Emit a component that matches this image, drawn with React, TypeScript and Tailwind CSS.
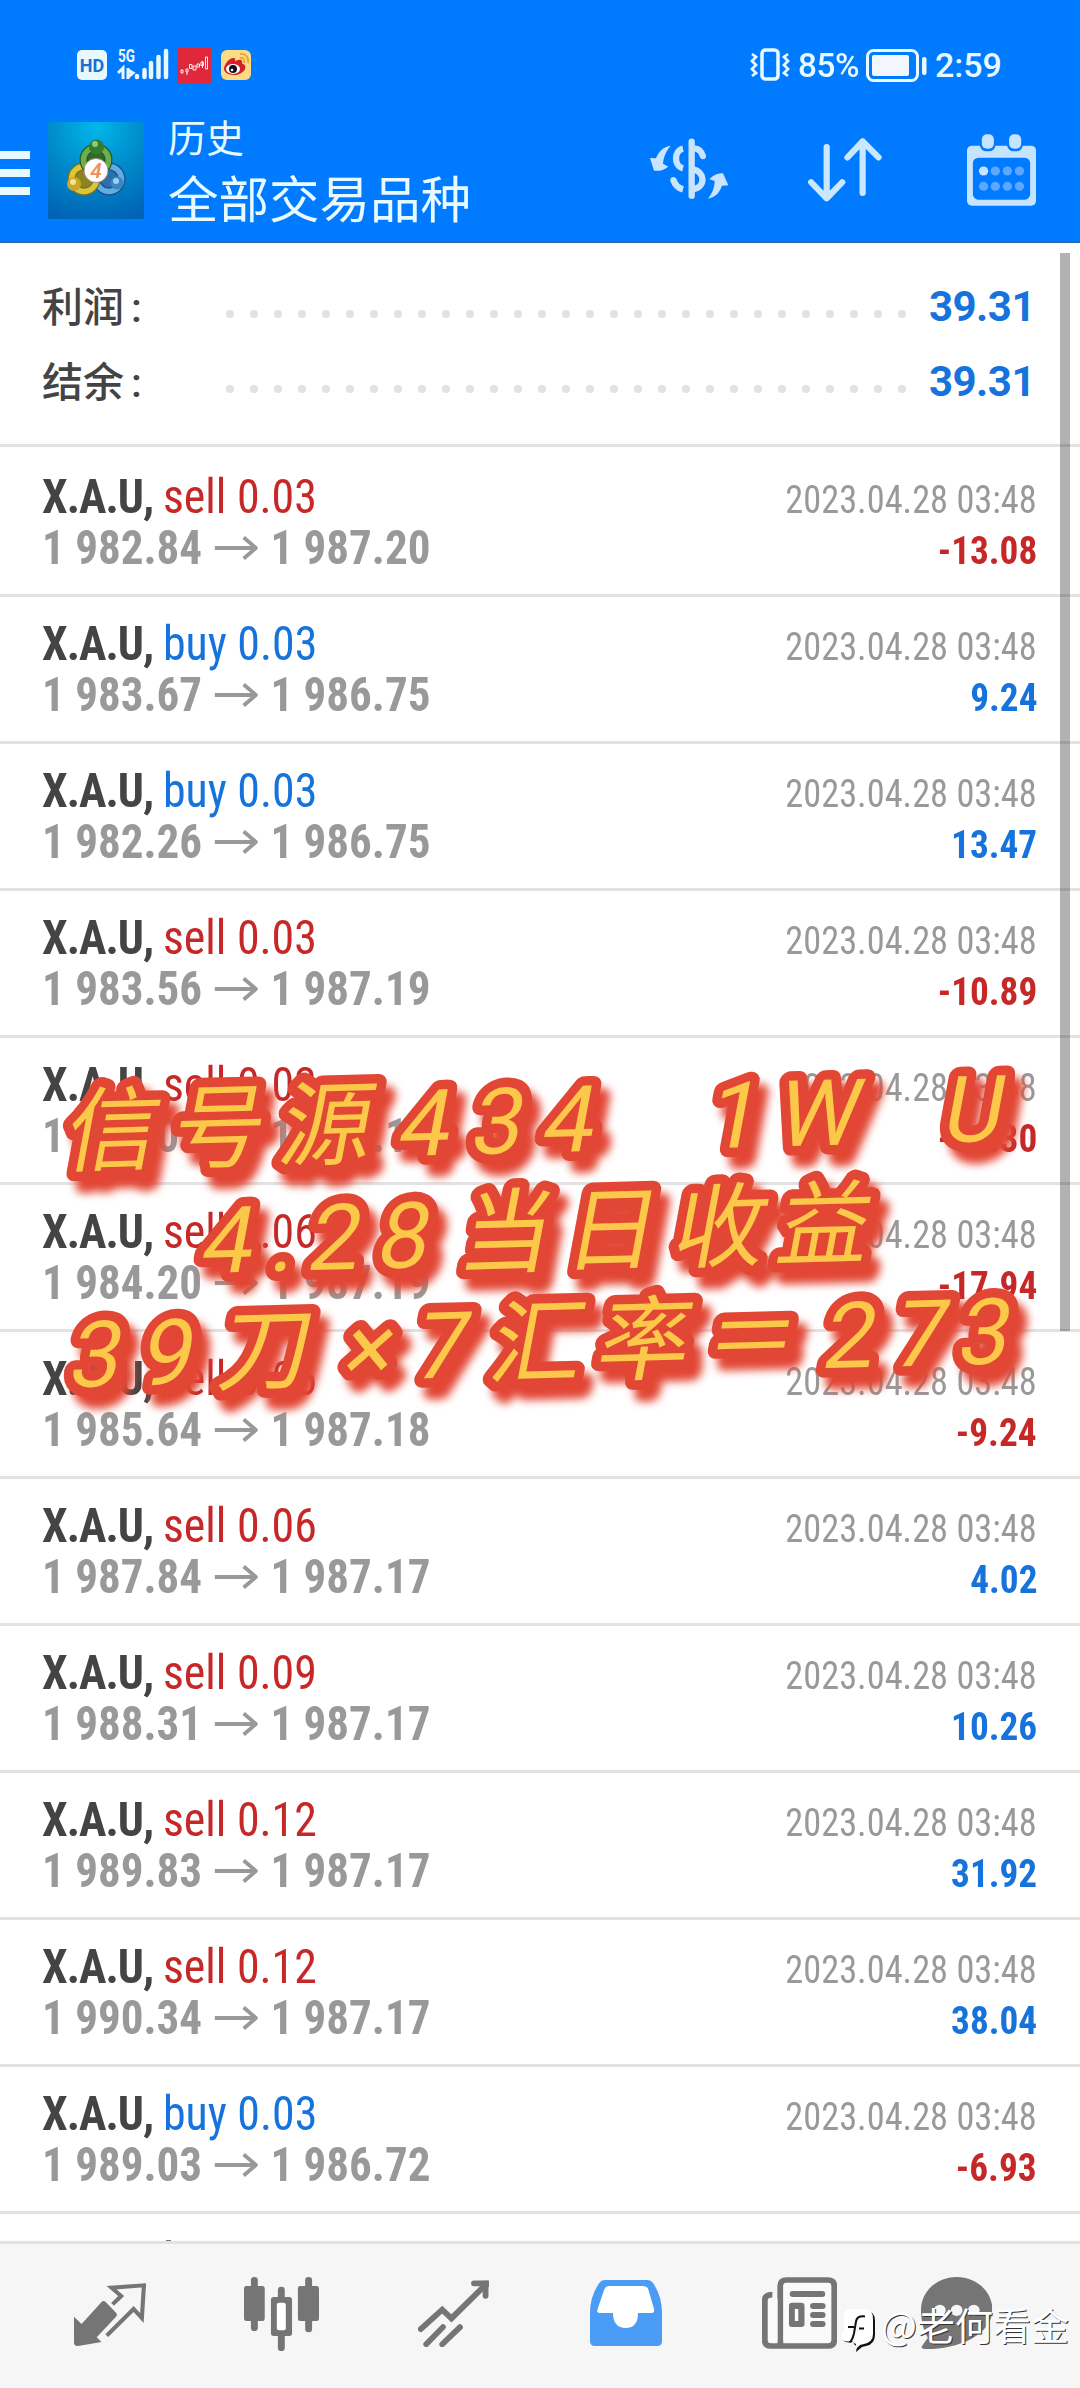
import clsx from 'clsx';

type Deal = {
  side: 'buy' | 'sell';
  volume: string;
  open: string;
  close: string;
  profit: string;
};

const TIME = '2023.04.28 03:48';

const deals: Deal[] = [
  { side: 'sell', volume: '0.03', open: '1 982.84', close: '1 987.20', profit: '-13.08' },
  { side: 'buy', volume: '0.03', open: '1 983.67', close: '1 986.75', profit: '9.24' },
  { side: 'buy', volume: '0.03', open: '1 982.26', close: '1 986.75', profit: '13.47' },
  { side: 'sell', volume: '0.03', open: '1 983.56', close: '1 987.19', profit: '-10.89' },
  { side: 'sell', volume: '0.03', open: '1 983.09', close: '1 987.19', profit: '-12.30' },
  { side: 'sell', volume: '0.06', open: '1 984.20', close: '1 987.19', profit: '-17.94' },
  { side: 'sell', volume: '0.06', open: '1 985.64', close: '1 987.18', profit: '-9.24' },
  { side: 'sell', volume: '0.06', open: '1 987.84', close: '1 987.17', profit: '4.02' },
  { side: 'sell', volume: '0.09', open: '1 988.31', close: '1 987.17', profit: '10.26' },
  { side: 'sell', volume: '0.12', open: '1 989.83', close: '1 987.17', profit: '31.92' },
  { side: 'sell', volume: '0.12', open: '1 990.34', close: '1 987.17', profit: '38.04' },
  { side: 'buy', volume: '0.03', open: '1 989.03', close: '1 986.72', profit: '-6.93' },
];

const summary = [
  { label: '利润', value: '39.31' },
  { label: '结余', value: '39.31' },
];

// sticker lettering, one centre x per character
const captions = [
  { text: '信号源4341WU', y: 1166, x: [108, 214, 322, 421, 494, 565, 731, 815, 970] },
  { text: '4.28当日收益', y: 1278, x: [224, 280, 331, 400, 502, 608, 716, 820] },
  { text: '39刀×7汇率＝273', y: 1389, x: [92, 164, 261, 365, 438, 533, 640, 747, 846, 917, 981] },
];

function StatusBar() {
  return (
    <div className="flex h-[130px] items-start justify-between pt-[47px] pl-[77px] pr-[78px]">
      <div className="flex items-start">
        <div className="mt-[3px] flex h-[30px] w-[30px] items-center justify-center rounded-[5px] bg-[#e8f8ff] text-[18px] font-bold text-[#1c6fd0]">
          HD
        </div>
        <svg className="ml-[11px] h-[34px] w-[50px] overflow-visible" viewBox="0 0 50 34">
          <text x="0" y="15" fontSize="19" fontWeight="700" textLength="17" lengthAdjust="spacingAndGlyphs" fill="#e8f8ff">
            5G
          </text>
          <path d="M0 26l5-5v11M10 21v11M10 23l5 3-5 4" stroke="#e8f8ff" strokeWidth="3" fill="none" />
          <path d="M19 29v1M26.500 23v7M33 16v14M40.500 10v20M48 4v26" stroke="#e8f8ff" strokeWidth="4.500" strokeLinecap="round" />
        </svg>
        <svg className="ml-[9px] mt-px h-[35px] w-[34px]" viewBox="0 0 34 35">
          <rect width="34" height="35" fill="#e0283c" />
          <path
            d="M4 22h2v3H4zM9 21h2v3H9zM10 24v3M12.500 16.500h2.500v4h-2.500zM16 18h3v4h-3zM20 16h2.500v3H20zM24 14h2.500v3.500H24zM25.500 13v7M28.500 9h2v12h-2z"
            stroke="#fff"
            strokeWidth="0.900"
            fill="none"
          />
        </svg>
        <svg className="ml-[10px] mt-[3px] h-[30px] w-[30px]" viewBox="0 0 30 30">
          <rect width="30" height="30" rx="6" fill="#fbdc82" />
          <path d="M3 19c0-5 6-12 10-11 2 .500 1 3 1 3s6-3 7 0c.500 2-.500 2 1 3 6 3 0 11-9 11-6 0-10-3-10-6z" fill="#d3202c" />
          <ellipse cx="12" cy="19" rx="7" ry="5" fill="#fff" />
          <circle cx="12" cy="19" r="4" fill="#111" />
          <circle cx="11" cy="20" r="1.300" fill="#fff" />
          <path d="M19 8c3-1 5 2 4 5M19 4c6-1 9 4 8 9" stroke="#e9a33a" strokeWidth="1.800" fill="none" />
        </svg>
      </div>
      <div className="flex items-start text-[#e8faff]">
        <svg className="mt-px h-[33px] w-[40px]" viewBox="0 0 40 33" fill="none" stroke="currentColor">
          <rect x="12" y="2" width="16" height="29" rx="3.500" strokeWidth="3.500" />
          <path d="M2 6l4 3-4 4 4 4-4 4 4 4-4 3M38 6l-4 3 4 4-4 4 4 4-4 4 4 3" strokeWidth="2.800" />
        </svg>
        <span className="ml-[8px] w-[63px] origin-left scale-x-[0.980] whitespace-nowrap text-[34px] leading-[36px] font-medium tracking-[-0.500px]">
          85%
        </span>
        <svg className="ml-[5px] mt-[2px] h-[33px] w-[61px]" viewBox="0 0 61 33">
          <rect x="1.500" y="1.500" width="50" height="30" rx="6" fill="none" stroke="currentColor" strokeWidth="3" />
          <rect x="6" y="6" width="37" height="21" rx="2" fill="#f2f6ff" />
          <rect x="56" y="8" width="4.500" height="18" rx="2" fill="currentColor" />
        </svg>
        <span className="ml-[8px] w-[67px] whitespace-nowrap text-[34px] leading-[36px] font-medium">2:59</span>
      </div>
    </div>
  );
}

function AppLogo() {
  return (
    <svg className="h-[97px] w-[96px]" viewBox="0 0 96 97">
      <defs>
        <radialGradient id="logoBg" cx="0.500" cy="0.050" r="1">
          <stop offset="0" stopColor="#00b8ea" />
          <stop offset="0.500" stopColor="#008acb" />
          <stop offset="1" stopColor="#0063b4" />
        </radialGradient>
      </defs>
      <rect width="96" height="97" fill="url(#logoBg)" />
      <circle cx="61" cy="57" r="12.500" fill="#2a6fae" stroke="#1c4f86" strokeWidth="8" />
      <circle cx="61" cy="57" r="12.500" fill="none" stroke="#5fade2" strokeWidth="5.500" />
      <circle cx="36" cy="57" r="12.500" fill="#8c8420" stroke="#77701d" strokeWidth="8" />
      <circle cx="36" cy="57" r="12.500" fill="none" stroke="#dcc53a" strokeWidth="5.500" />
      <circle cx="48" cy="38" r="12.500" fill="#2f6a28" stroke="#245c1c" strokeWidth="8" />
      <circle cx="48" cy="38" r="12.500" fill="none" stroke="#6fae4e" strokeWidth="5.500" />
      <circle cx="48.500" cy="25" r="7.500" fill="#357c2c" />
      <circle cx="47" cy="22" r="3" fill="#8ccb78" />
      <circle cx="26" cy="62" r="7" fill="#c8a82c" />
      <circle cx="25" cy="60" r="3" fill="#f4e48a" />
      <circle cx="69" cy="61" r="6.500" fill="#3c86c4" />
      <circle cx="68" cy="59" r="3" fill="#9ad2f4" />
      <circle cx="48" cy="48.500" r="12" fill="#fff" stroke="#a9907e" strokeWidth="1" />
      <text x="48" y="56" textAnchor="middle" fontSize="21" fontWeight="600" fontStyle="italic" fill="#f0935a">
        4
      </text>
    </svg>
  );
}

function Header() {
  return (
    <header className="h-[243px] border-b-2 border-[#2d6ca8] bg-[#007aff]">
      <StatusBar />
      <div className="flex items-start">
        <div className="mt-[21px] flex w-[30px] flex-col gap-[10px]">
          <div className="h-[8px] bg-[#e6faff]" />
          <div className="h-[8px] bg-[#e6faff]" />
          <div className="h-[8px] bg-[#e6faff]" />
        </div>
        <div className="-mt-[8px] ml-[18px]">
          <AppLogo />
        </div>
        <div className="-mt-[14px] ml-[24px] w-[460px] text-[#e6faff]">
          <div className="text-[38px] leading-[46px]">历史</div>
          <div className="mt-[9px] text-[50.500px] leading-[60px]">全部交易品种</div>
        </div>
        <svg className="ml-[21px] mt-[8px] h-[62px] w-[80px]" viewBox="30 55 240 186" fill="#c9e4ff">
          <path d="M95 78c-22 4-35 15-44 38l-18-1 12 38c15 2 30-2 43-12l-16-9c2-22 10-38 23-54z" />
          <path d="M207 237c20-4 34-16 42-39l19-1-16-36c-14-2-28 4-41 18l16 5c-1 22-8 38-20 53z" />
          <g fill="none" stroke="#c9e4ff" strokeWidth="19">
            <path d="M158 66v162" strokeLinecap="round" />
            <path d="M132 87c-28 6-28 52 0 59" />
            <path d="M103 180c4 15 14 25 29 29" />
            <circle cx="103" cy="181" r="9" stroke="none" fill="#c9e4ff" />
            <path d="M166 86c12 1 22 9 25 23" />
            <circle cx="192" cy="110" r="9" stroke="none" fill="#c9e4ff" />
            <path d="M162 149c38 8 38 54 0 60" />
          </g>
        </svg>
        <svg
          className="ml-[79px] mt-[8px] h-[64px] w-[74px]"
          viewBox="782 326 214 191"
          preserveAspectRatio="none"
          fill="none"
          stroke="#c9e8ff"
          strokeWidth="18"
          strokeLinecap="round"
          strokeLinejoin="round"
        >
          <path d="M836 353v153M791 458l45 48 45-48M940 490V336M896 384l44-48 46 48" />
        </svg>
        <svg className="ml-[85px] mt-[4px] h-[72px] w-[69px]" viewBox="1243 310 200 216" preserveAspectRatio="none">
          <rect x="1243" y="345" width="200" height="180" rx="14" fill="#c4e4ff" />
          <rect x="1260" y="381" width="166" height="126" rx="16" fill="#007aff" />
          <rect x="1280" y="304" width="46" height="58" rx="20" fill="#007aff" />
          <rect x="1359" y="304" width="46" height="58" rx="20" fill="#007aff" />
          <rect x="1286" y="311" width="35" height="43" rx="15" fill="#c4e4ff" />
          <rect x="1365" y="311" width="35" height="43" rx="15" fill="#c4e4ff" />
          <g fill="#5aa9ff">
            <circle cx="1291" cy="421" r="13.500" fill="#c4e4ff" />
            <circle cx="1325" cy="421" r="13.500" />
            <circle cx="1360" cy="421" r="13.500" />
            <circle cx="1395" cy="421" r="13.500" />
            <circle cx="1291" cy="467" r="13.500" />
            <circle cx="1325" cy="467" r="13.500" />
            <circle cx="1360" cy="467" r="13.500" />
            <circle cx="1395" cy="467" r="13.500" />
          </g>
        </svg>
      </div>
    </header>
  );
}

function Summary() {
  return (
    <section className="h-[204px] border-b-[3px] border-[#e2e2e2] pt-[26px]">
      {summary.map((item) => (
        <div key={item.label} className="flex h-[75px] items-center pl-[42px]">
          <div className="mt-[4px] flex w-[184px] text-[41px] leading-[71px] font-medium text-[#444]">
            <span>{item.label}</span>
            <span className="ml-[7px]">:</span>
          </div>
          <div className="mt-[14px] flex w-[680px] gap-[16px]">
            {Array.from({ length: 29 }, (_, i) => (
              <span key={i} className="size-[8px] flex-none rounded-full bg-[#e2e2e2]" />
            ))}
          </div>
          <span className="ml-auto mr-[45px] text-[42px] leading-[75px] font-bold tracking-[-0.500px] text-[#1673dc]">
            {item.value}
          </span>
        </div>
      ))}
    </section>
  );
}

function Arrow() {
  return (
    <svg className="mx-[13.500px] h-[24px] w-[46px] self-center" viewBox="0 0 46 24" fill="none" stroke="#999" strokeWidth="4">
      <path d="M0 12h44M31 1.500L44 12 31 22.500" />
    </svg>
  );
}

function DealRow({ deal, first }: { deal: Deal; first: boolean }) {
  return (
    <div
      className={clsx(
        'border-b-[3px] border-[#e2e2e2] pl-[42px] pr-[43px] font-[Roboto_Condensed,Roboto,sans-serif] font-stretch-condensed',
        first ? 'h-[150px] pt-[24px]' : 'h-[147px] pt-[21px]',
      )}
    >
      <div className="flex h-[51px] items-baseline justify-between leading-[51px]">
        <div className="origin-left scale-x-[0.955] text-[48px] whitespace-nowrap">
          <span className="font-bold tracking-[-1px] text-[#444]">X.A.U, </span>
          <span className={deal.side === 'buy' ? 'text-[#1673dc]' : 'text-[#c62828]'}>
            {deal.side} {deal.volume}
          </span>
        </div>
        <div className="origin-right scale-x-[0.932] text-[39px] text-[#999]">{TIME}</div>
      </div>
      <div className="flex h-[51px] items-baseline justify-between leading-[51px]">
        <div className="flex origin-left scale-x-[0.938] items-baseline text-[48px] font-bold whitespace-nowrap text-[#999]">
          <span>{deal.open}</span>
          <Arrow />
          <span>{deal.close}</span>
        </div>
        <div
          className={clsx(
            'origin-right scale-x-[0.955] text-[39px] font-bold',
            deal.profit.startsWith('-') ? 'text-[#c62828]' : 'text-[#1673dc]',
          )}
        >
          {deal.profit}
        </div>
      </div>
    </div>
  );
}

function CaptionOverlay() {
  return (
    <svg
      className="absolute left-0 top-0 h-[1500px] w-[1080px] drop-shadow-[9px_12px_4px_#e24634]"
      viewBox="0 0 1080 1500"
      fontSize="92"
      textAnchor="middle"
      fill="#fbc84a"
      stroke="#e24634"
      strokeWidth="19"
      strokeLinejoin="round"
      paintOrder="stroke"
    >
      {captions.map((line) => (
        <text key={line.text} x={line.x.join(' ')} y="0" transform={`translate(0 ${line.y}) rotate(-1.45) skewX(-12)`}>
          {line.text}
        </text>
      ))}
    </svg>
  );
}

function BottomNav() {
  return (
    <nav className="relative flex h-[147px] items-start border-t-[3px] border-[#e2e2e2] bg-[#f6f6f6] text-[#757575]">
      <svg className="ml-[74px] mt-[39px] h-[63px] w-[72px]" viewBox="215 279 209 189" preserveAspectRatio="none">
        <path d="M215 380l22 22 58-66q6-6 12 0l30 32q5 6 0 12l-56 62 14 14-68 12q-12 1-12-8z" fill="currentColor" />
        <path d="M327 343l25-25-28-25 94-7-6 98-24-27-78 80" fill="none" stroke="currentColor" strokeWidth="12" />
      </svg>
      <svg className="ml-[98px] mt-[33px] h-[74px] w-[75px]" viewBox="709 261 217 222" preserveAspectRatio="none" fill="currentColor">
        <rect x="729" y="261" width="20" height="162" rx="10" />
        <rect x="709" y="288" width="60" height="105" rx="7" />
        <rect x="886" y="261" width="20" height="166" rx="10" />
        <rect x="865" y="288" width="61" height="105" rx="7" />
        <rect x="807" y="290" width="20" height="193" rx="10" />
        <rect x="787" y="321" width="61" height="117" rx="8" />
        <rect x="804" y="338" width="26" height="83" rx="6" fill="#fff" />
      </svg>
      <svg
        className="ml-[99px] mt-[36px] h-[67px] w-[71px]"
        viewBox="1213 269 208 199"
        preserveAspectRatio="none"
        fill="none"
        stroke="currentColor"
        strokeWidth="17"
        strokeLinecap="round"
      >
        <path d="M1221 415l63-58 27 26 98-98M1237 460l49-51M1284 460l52-51M1377 279h34v37" />
        <path d="M1403 271h18v20z" fill="currentColor" stroke="none" />
      </svg>
      <svg className="ml-[101px] mt-[36px] h-[66px] w-[72px]" viewBox="147 270 210 198" preserveAspectRatio="none">
        <path d="M190 270h125q10 0 16 9 26 40 26 90v85q0 14-14 14H161q-14 0-14-14v-85q0-50 27-90 6-9 16-9z" fill="#4a9cf5" />
        <path d="M203 288h98q12 0 16 10l17 60q2 11-8 11h-39q0 45-36 45t-37-45h-37q-12 0-8-11l19-58q4-12 15-12z" fill="#fff" />
      </svg>
      <svg className="ml-[100px] mt-[33px] h-[72px] w-[75px]" viewBox="646 261 217 216" preserveAspectRatio="none">
        <path
          d="M676 314q-22 0-22 18v118q0 18 18 18h30M699 461V288q0-18 18-18h120q18 0 18 18v162q0 18-18 18H668"
          fill="none"
          stroke="currentColor"
          strokeWidth="17"
        />
        <rect x="664" y="324" width="27" height="135" rx="6" fill="#fafafa" />
        <rect x="708" y="279" width="138" height="180" rx="10" fill="#fafafa" />
        <g fill="currentColor">
          <rect x="726" y="303" width="103" height="18" rx="9" />
          <rect x="785" y="339" width="45" height="18" rx="9" />
          <rect x="785" y="366" width="45" height="18" rx="9" />
          <rect x="785" y="393" width="45" height="18" rx="9" />
          <rect x="724" y="338" width="45" height="73" rx="9" />
        </g>
        <rect x="741" y="357" width="10" height="36" fill="#fff" />
      </svg>
      <svg className="ml-[84px] mt-[33px] h-[72px] w-[71px]" viewBox="1109 261 207 216" preserveAspectRatio="none">
        <path
          d="M1213 261c58 0 104 44 104 98 0 70-90 118-193 118q-20 0-10-12l15-22c-12-20-20-50-20-84 0-54 46-98 104-98z"
          fill="currentColor"
        />
        <g fill="#f6f6f6">
          <circle cx="1164" cy="361" r="17" />
          <circle cx="1213" cy="361" r="17" />
          <circle cx="1263" cy="361" r="17" />
        </g>
      </svg>
      <div className="absolute left-[839px] top-[52px] flex items-start">
        <svg className="mt-[13px] h-[44px] w-[37px]" viewBox="0 0 37 44">
          <path d="M12 2h15q9 0 9 10v14q0 9-9 11l-4 1-6 5 1-6q-3-1-4-4-11 2-11-6 0-3 3-5V13Q6 2 12 2z" fill="#111" />
          <path d="M10 0h15q9 0 9 10v15q0 8-9 10l-4 1-4 4v-5q-3-1-4-3-11 2-11-5 0-3 3-5V11Q4 0 10 0z" fill="#fff" />
          <path d="M26 7.500q-8-1-9 5l-2 12q-1 5-4 9M9 18h6M20 19.500h5" stroke="#111" strokeWidth="2" fill="none" />
        </svg>
        <span className="ml-[5px] whitespace-nowrap font-['Noto_Sans_CJK_SC',sans-serif] text-[38px] leading-[56px] text-white [text-shadow:1px_1px_0_#333]">
          @老何看金
        </span>
      </div>
    </nav>
  );
}

export default function App() {
  return (
    <div className="relative flex h-[2388px] w-[1080px] flex-col overflow-hidden bg-white font-[Roboto,'Noto_Sans_CJK_SC',sans-serif]">
      <Header />
      <Summary />
      <main className="h-[1794px] overflow-hidden">
        {deals.map((deal, i) => (
          <DealRow key={i} deal={deal} first={i === 0} />
        ))}
        {/* tip of the next row, peeking above the tab bar */}
        <div className="mt-[26px] ml-[166px] h-px w-[5px] bg-[#777]" />
      </main>
      <BottomNav />

      <div className="absolute left-[1060px] top-[253px] h-[1078px] w-[10px] bg-black/30" />
      <CaptionOverlay />
    </div>
  );
}
